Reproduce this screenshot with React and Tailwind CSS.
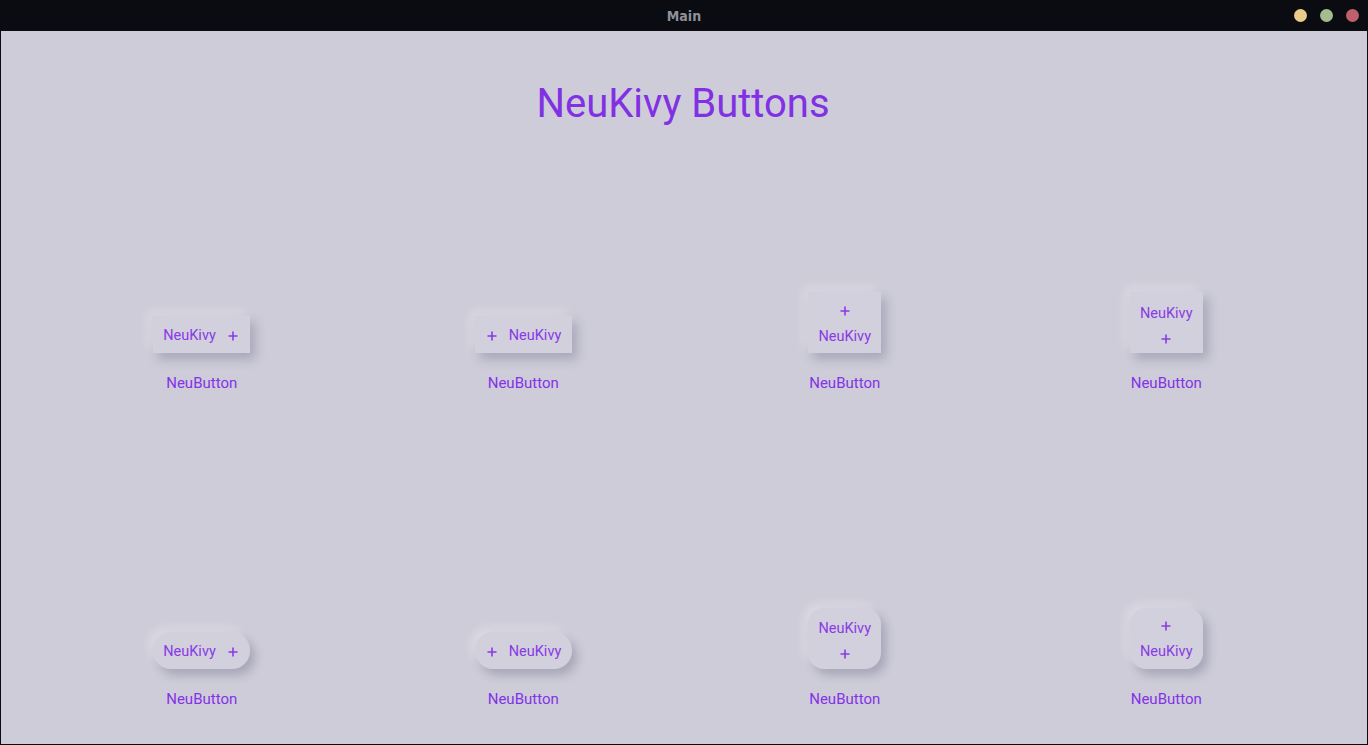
import React from "react";

const Plus = () => (
  <svg width="10" height="10" viewBox="0 0 10 10" className="block shrink-0">
    <path d="M5 0.5V9.5M0.5 5H9.5" stroke="#8a3ae6" strokeWidth="1.6" />
  </svg>
);

const shadow =
  "shadow-[5px_6px_10px_rgba(60,55,90,0.25),-5px_-5px_10px_rgba(255,255,255,0.28)]";

const Label = () => (
  <div className="mt-[21px] text-[15px] leading-[18px] text-[#8433e6]">NeuButton</div>
);

const Txt = () => (
  <span className="block text-[14.5px] leading-[16px] text-[#8a3ae6]">NeuKivy</span>
);

function HBtn({ plusFirst, round }) {
  return (
    <div
      className={`flex h-[37px] w-[97px] items-center pt-[3px] bg-[#d1d0dc] ${shadow} ${
        round ? "rounded-[18px]" : ""
      } ${plusFirst ? "pl-[12px] pr-[11px] gap-[12px]" : "pl-[10px] pr-[12px] gap-[12px]"}`}
    >
      {plusFirst ? (
        <>
          <Plus />
          <Txt />
        </>
      ) : (
        <>
          <Txt />
          <Plus />
        </>
      )}
    </div>
  );
}

function VBtn({ plusFirst, round }) {
  const pad = round ? "pt-[13px]" : "pt-[14px]";
  return (
    <div
      className={`flex h-[61px] w-[73px] flex-col items-center bg-[#d1d0dc] ${shadow} ${pad} ${
        round ? "rounded-[16px]" : ""
      } ${plusFirst ? "gap-[13px]" : "gap-[12px]"}`}
    >
      {plusFirst ? (
        <>
          <Plus />
          <Txt />
        </>
      ) : (
        <>
          <Txt />
          <Plus />
        </>
      )}
    </div>
  );
}

const Cell = ({ children }) => (
  <div className="flex flex-col items-center justify-end">
    {children}
    <Label />
  </div>
);

export default function App() {
  return (
    <div
      className="flex h-[745px] w-[1368px] flex-col overflow-hidden border border-[#0b0c10] bg-[#cdccd8]"
      style={{ fontFamily: "Roboto, 'Noto Sans', sans-serif" }}
    >
      <div className="relative flex h-[30px] shrink-0 items-center justify-center bg-[#0b0c11]">
        <span
          className="text-[14px] font-bold text-[#8d929c]"
          style={{ fontFamily: "'DejaVu Sans Condensed', 'DejaVu Sans', sans-serif" }}
        >
          Main
        </span>
        <div className="absolute right-[8px] top-[8px] flex gap-[13px]">
          <div className="h-[13px] w-[13px] rounded-full bg-[#ebcb8b]" />
          <div className="h-[13px] w-[13px] rounded-full bg-[#a3be8c]" />
          <div className="h-[13px] w-[13px] rounded-full bg-[#bf616a]" />
        </div>
      </div>
      <div className="flex flex-col px-[40px]">
        <div className="pt-[49px] pr-[2px] text-center text-[40px] leading-[48px] text-[#8131e3]">
          NeuKivy Buttons
        </div>
        <div className="grid h-[264px] grid-cols-4">
          <Cell><HBtn /></Cell>
          <Cell><HBtn plusFirst /></Cell>
          <Cell><VBtn plusFirst /></Cell>
          <Cell><VBtn /></Cell>
        </div>
        <div className="grid h-[316px] grid-cols-4">
          <Cell><HBtn round /></Cell>
          <Cell><HBtn plusFirst round /></Cell>
          <Cell><VBtn round /></Cell>
          <Cell><VBtn plusFirst round /></Cell>
        </div>
      </div>
    </div>
  );
}
